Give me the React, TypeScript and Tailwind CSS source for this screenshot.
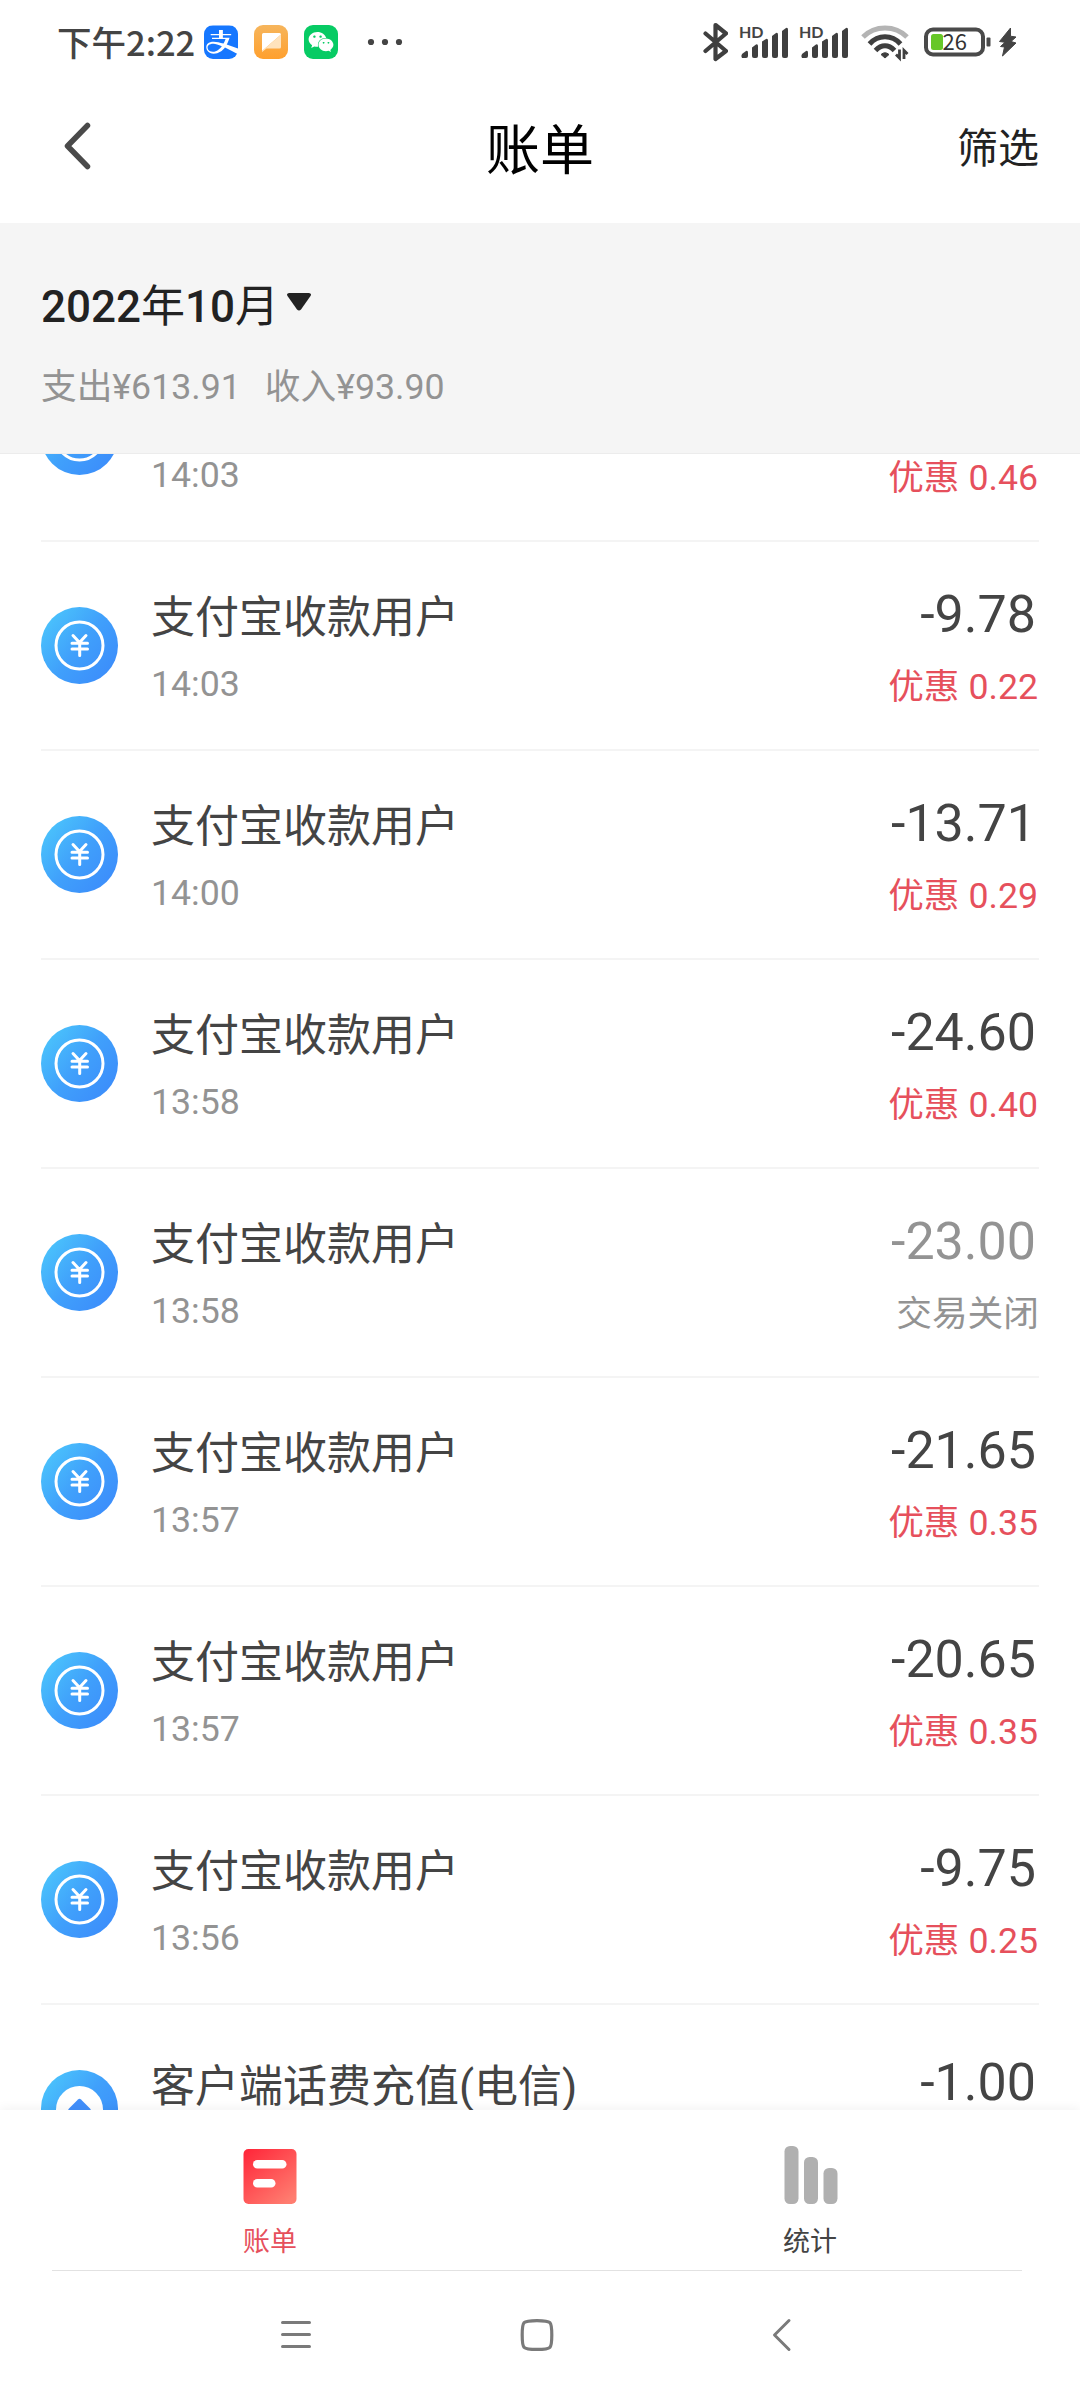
import { FaAlipay, FaWeixin } from "react-icons/fa";

type Bill = {
  id: number;
  title: string;
  time: string;
  amount: string;
  note: string;
  closed?: boolean;
  icon?: "yen" | "recharge";
  low?: boolean;
};

const bills: Bill[] = [
  { id: 1, title: "支付宝收款用户", time: "14:03", amount: "-20.46", note: "优惠 0.46" },
  { id: 2, title: "支付宝收款用户", time: "14:03", amount: "-9.78", note: "优惠 0.22" },
  { id: 3, title: "支付宝收款用户", time: "14:00", amount: "-13.71", note: "优惠 0.29" },
  { id: 4, title: "支付宝收款用户", time: "13:58", amount: "-24.60", note: "优惠 0.40" },
  { id: 5, title: "支付宝收款用户", time: "13:58", amount: "-23.00", note: "交易关闭", closed: true },
  { id: 6, title: "支付宝收款用户", time: "13:57", amount: "-21.65", note: "优惠 0.35" },
  { id: 7, title: "支付宝收款用户", time: "13:57", amount: "-20.65", note: "优惠 0.35" },
  { id: 8, title: "支付宝收款用户", time: "13:56", amount: "-9.75", note: "优惠 0.25" },
  { id: 9, title: "客户端话费充值(电信)", time: "", amount: "-1.00", note: "", icon: "recharge", low: true },
];

const Signal = () => (
  <svg className="h-[36px] w-[50px] overflow-visible" viewBox="0 0 50 36">
    <text x="-1" y="14" fontSize="16" fontWeight="700" fill="#444" fontFamily="Lato, sans-serif">
      HD
    </text>
    <g fill="#3f3f3f">
      <path d="M2 34q-1.500-1.500 0-4l4-3q2-.6 2 1.500V32q0 2-2 2z" />
      <path d="M12 32v-8.500l4-3q2-.6 2 1.500v10q0 2-2 2h-2q-2 0-2-2z" />
      <path d="M22 32V17.500l4-2.500q2-.6 2 1.500V32q0 2-2 2h-2q-2 0-2-2z" />
      <path d="M32 32V12l4-3q2-.6 2 1.500V32q0 2-2 2h-2q-2 0-2-2z" />
      <path d="M42 32V7l4-3q2-.6 2 1.500V32q0 2-2 2h-2q-2 0-2-2z" />
    </g>
  </svg>
);

const StatusBar = () => (
  <div className="flex h-[84px] shrink-0 items-center justify-between pl-[57px] pr-[62px]">
    <div className="flex items-center">
      <span className="mb-0.5 w-[147px] whitespace-nowrap font-['Noto_Sans_CJK_SC',sans-serif] text-[34.5px] font-medium leading-[50px] text-[#444]">
        下午2:22
      </span>
      <div className="flex h-[34px] w-[34px] items-center justify-center overflow-hidden rounded-[9px] bg-white">
        <FaAlipay className="h-[39px] w-[34px] shrink-0 text-[#1677ff]" />
      </div>
      <svg className="ml-4 h-[34px] w-[34px]" viewBox="0 0 34 34">
        <defs>
          <linearGradient id="noteBg" x1="0" y1="0" x2="0" y2="1">
            <stop offset="0" stopColor="#f6b55c" />
            <stop offset="1" stopColor="#ffa02e" />
          </linearGradient>
        </defs>
        <rect width="34" height="34" rx="9" fill="url(#noteBg)" />
        <path d="M8 9.500q0-1.500 1.500-1.500h16q1.500 0 1.500 1.500L8 26z" fill="#fff" />
        <path d="M27 9.500V22q0 1.500-1.500 1.500H12.500L8 27v-1z" fill="#ffe3bd" />
      </svg>
      <div className="ml-4 flex h-[34px] w-[34px] items-center justify-center rounded-[9px] bg-[#07cb64]">
        <FaWeixin className="h-[26px] w-[26px] text-white" />
      </div>
      <svg className="ml-[29px] h-2 w-9" viewBox="0 0 36 8" fill="#444">
        <circle cx="4" cy="4" r="3.100" />
        <circle cx="18" cy="4" r="3.100" />
        <circle cx="32" cy="4" r="3.100" />
      </svg>
    </div>
    <div className="flex items-center">
      <svg className="mr-3 h-[40px] w-[25px]" viewBox="0 0 25 40" fill="none" stroke="#3f3f3f" strokeWidth="4.200" strokeLinejoin="round" strokeLinecap="round">
        <path d="M2.500 11.500 23 29 12.500 37V3L23 11.500 2.500 29" />
      </svg>
      <Signal />
      <div className="w-2.5" />
      <Signal />
      <svg className="ml-3 mr-0.5 h-[36px] w-[48px] overflow-visible" viewBox="0 0 48 36" fill="none" strokeWidth="5">
        <path d="M1 13Q10 4 23 4t22 9" stroke="#b4b4b4" />
        <path d="M7.500 20Q14 12.800 23 12.800T38.500 20" stroke="#3f3f3f" />
        <path d="M13.500 26.500Q18 21.800 23 21.800t9.500 4.700" stroke="#3f3f3f" />
        <path d="M19 30.500q4-3.500 8 0L23 34z" fill="#3f3f3f" stroke="#3f3f3f" strokeWidth="1" />
        <path d="M37.500 25.500V34l-3.500-3.500M42 35v-8.500l3.500 3.500" stroke="#3f3f3f" strokeWidth="2.800" />
      </svg>
      <svg className="ml-3 h-[30px] w-[68px] overflow-visible" viewBox="0 0 68 30">
        <rect x="2" y="2.500" width="57" height="25" rx="7" fill="none" stroke="#4a4a4a" strokeWidth="4" />
        <rect x="62.500" y="10.500" width="4" height="9" rx="1" fill="#4a4a4a" />
        <rect x="7" y="7" width="12" height="16" rx="2.500" fill="#67c728" />
        <text x="18.500" y="23" fontSize="22" fill="#333" fontFamily="'Noto Sans CJK SC', sans-serif">
          26
        </text>
      </svg>
      <svg className="ml-1.5 h-[30px] w-[20px]" viewBox="0 0 20 30" fill="#444" stroke="#444" strokeLinejoin="round">
        <path d="M12.500 1 1.500 14.500l5.500.8L2.500 19.500l4 .5L4.500 29 18 16l-5-1.500 5-4.500-5.500-.8z" />
      </svg>
    </div>
  </div>
);

const Header = () => (
  <div className="grid h-[139px] shrink-0 grid-cols-3 items-center pb-[11px] pl-[62px] pr-[41px] text-black">
    <svg className="mb-[5px] h-[50px] w-[30px]" viewBox="0 0 30 50" fill="none" stroke="#4a4a4a" strokeWidth="5.500" strokeLinecap="round" strokeLinejoin="round">
      <path d="M25.500 4.500 5.500 25l20 20.500" />
    </svg>
    <h1 className="ml-[-21px] mt-[7px] whitespace-nowrap text-center text-[54px] leading-[80px]">账单</h1>
    <button className="mt-px text-right text-[41px] leading-[60px] text-[#222]">筛选</button>
  </div>
);

const YenIcon = () => (
  <svg className="h-[77px] w-[77px] shrink-0" viewBox="0 0 77 77">
    <defs>
      <linearGradient id="coin" x1="0" y1="0.1" x2="1" y2="0.9">
        <stop offset="0" stopColor="#4cc8fc" />
        <stop offset="0.5" stopColor="#40a0fb" />
        <stop offset="1" stopColor="#3b8afb" />
      </linearGradient>
    </defs>
    <circle cx="38.500" cy="38.500" r="38.500" fill="url(#coin)" />
    <circle cx="38.500" cy="38.500" r="23.500" fill="none" stroke="#fff" strokeWidth="3" />
    <path d="M32 28.500l6.500 7 6.500-7M31 36.300h15.500M31 42h15.500M38.700 36v12.500" fill="none" stroke="#fff" strokeWidth="3" strokeLinecap="round" />
  </svg>
);

const RechargeIcon = () => (
  <svg className="h-[77px] w-[77px] shrink-0" viewBox="0 0 77 77">
    <circle cx="38.500" cy="38.500" r="38.500" fill="url(#coin)" />
    <circle cx="38.500" cy="39.500" r="23.500" fill="#fff" />
    <path d="M37 29.500q1.500-1.500 3 0l9 9q2 2.500-1 2.500H29q-3 0-1-2.500z" fill="#418ffb" />
  </svg>
);

const BillRow = ({ bill }: { bill: Bill }) => (
  <li className="flex h-[209px] shrink-0 border-b-2 border-[#f4f4f4]">
    <div className="flex items-center">{bill.icon === "recharge" ? <RechargeIcon /> : <YenIcon />}</div>
    <div className={bill.low ? "ml-[33px] flex-1 pt-[52px]" : "ml-[33px] flex-1 pt-[46px]"}>
      <p className="text-[44px] leading-[60px] text-[#444]">{bill.title}</p>
      <p className="mt-[15px] text-[35.7px] leading-[42px] text-[#939393]">{bill.time}</p>
    </div>
    <div className={bill.low ? "pt-[48px] text-right" : "pt-[43px] text-right"}>
      <p className={bill.closed ? "mr-[3px] text-[52px] leading-[60px] text-[#939393]" : "mr-[3px] text-[52px] leading-[60px] text-[#444]"}>
        {bill.amount}
      </p>
      <p className={bill.closed ? "mt-[21px] text-[35.7px] leading-[42px] text-[#939393]" : "mr-[1px] mt-[21px] text-[35.7px] leading-[42px] text-[#e6505c]"}>
        {bill.note}
      </p>
    </div>
  </li>
);

const TabBar = () => (
  <div className="relative h-[161px] shrink-0 bg-white shadow-[0_-2px_10px_rgba(0,0,0,0.05)]">
    <div className="grid h-[160px] grid-cols-2 text-[27px] leading-[40px]">
      <div className="flex flex-col items-center pt-9 text-[#e6505c]">
        <svg className="h-[60px] w-[54px]" viewBox="0 0 54 60">
          <defs>
            <linearGradient id="bill" x1="0" y1="0" x2="0.8" y2="1">
              <stop offset="0" stopColor="#ff2438" />
              <stop offset="1" stopColor="#ff7d70" />
            </linearGradient>
          </defs>
          <rect x="0.500" y="3" width="53" height="55" rx="5" fill="url(#bill)" />
          <rect x="10" y="14" width="33.500" height="8.500" rx="4.250" fill="#fff" />
          <rect x="10" y="33" width="22.500" height="8.500" rx="4.250" fill="#fff" />
        </svg>
        <span className="mt-4">账单</span>
      </div>
      <div className="flex flex-col items-center pt-9 text-[#444]">
        <svg className="ml-0.5 h-[60px] w-[54px]" viewBox="0 0 54 60" fill="#b0b0b0">
          <rect x="0.500" y="0" width="14" height="58" rx="5.500" />
          <rect x="20" y="11" width="14" height="47" rx="5.500" />
          <rect x="39.500" y="22" width="14" height="36" rx="5.500" />
        </svg>
        <span className="mt-4">统计</span>
      </div>
    </div>
    <div className="ml-[52px] mr-[58px] h-px bg-[#e2e2e2]" />
  </div>
);

const NavBar = () => (
  <div className="relative flex h-[129px] shrink-0 items-start bg-white pl-[279px] pt-[46px]">
    <svg className="h-[36px] w-[34px]" viewBox="0 0 34 36" stroke="#7a7a7a" strokeWidth="3" strokeLinecap="round">
      <path d="M3.500 5.500h27M3.500 17.500h27M3.500 29.500h27" />
    </svg>
    <svg className="ml-[206px] h-[36px] w-[36px]" viewBox="0 0 36 36" fill="none" stroke="#7a7a7a" strokeWidth="3.200">
      <path d="M18 3.600c9 0 11.400.6 12.900 2.100S32.800 10 32.800 18s-.4 10.800-1.900 12.300S27 32.400 18 32.400 6.600 31.800 5.100 30.300 3.200 26 3.200 18s.4-10.800 1.900-12.300S9 3.600 18 3.600z" />
    </svg>
    <svg className="ml-[215px] h-[36px] w-[24px]" viewBox="0 0 24 36" fill="none" stroke="#7a7a7a" strokeWidth="3" strokeLinecap="round" strokeLinejoin="round">
      <path d="M19 3.500 4.500 18 19 32.500" />
    </svg>
  </div>
);

export default function App() {
  return (
    <div className="flex h-[2400px] w-[1080px] flex-col overflow-hidden bg-white font-[Roboto,'Noto_Sans_CJK_SC',sans-serif]">
      <StatusBar />
      <Header />
      <div className="h-[231px] shrink-0 border-b border-[#ececec] bg-[#f5f5f5] px-[41px] pt-[54px]">
        <div className="flex items-center text-[44px] leading-[60px] text-[#222]">
          <span className="font-medium">2022</span>
          <span>年</span>
          <span className="font-medium">10</span>
          <span>月</span>
          <svg className="mb-[10px] ml-[7px] h-[20px] w-[26px]" viewBox="0 0 26 20" fill="#222">
            <path d="M3 1h20q3 .5 1.500 3L15 17.500q-2 2-4 0L1.500 4Q0 1.500 3 1z" />
          </svg>
        </div>
        <div className="mt-[29px] flex gap-6 text-[35.7px] leading-[42px] text-[#939393]">
          <span>支出¥613.91</span>
          <span>收入¥93.90</span>
        </div>
      </div>
      <div className="h-[1656px] shrink-0 overflow-hidden px-[41px]">
        <ul className="-mt-[121px] flex flex-col">
          {bills.map((bill) => (
            <BillRow key={bill.id} bill={bill} />
          ))}
        </ul>
      </div>
      <TabBar />
      <NavBar />
    </div>
  );
}
